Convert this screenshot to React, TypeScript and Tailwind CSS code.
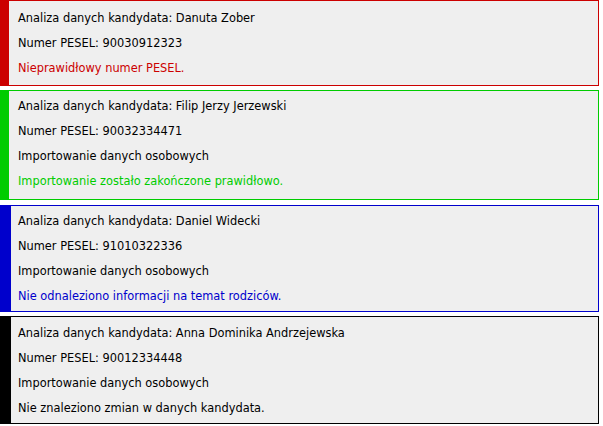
const entries = [
  {
    color: '#cc0000',
    bar: 'w-[8px]',
    box: 'pt-[5px] pb-[4px] pl-[9px]',
    gap: 'mb-[4px]',
    lines: ['Analiza danych kandydata: Danuta Zober', 'Numer PESEL: 90030912323'],
    result: 'Nieprawidłowy numer PESEL.',
    resultColor: 'text-[#cc0000]',
  },
  {
    color: '#00cc00',
    bar: 'w-[8px]',
    box: 'pt-[3px] pb-[5px] pl-[9px]',
    gap: 'mb-[5px]',
    lines: ['Analiza danych kandydata: Filip Jerzy Jerzewski', 'Numer PESEL: 90032334471', 'Importowanie danych osobowych'],
    result: 'Importowanie zostało zakończone prawidłowo.',
    resultColor: 'text-[#00cc00]',
  },
  {
    color: '#0000cc',
    bar: 'w-[10px]',
    box: 'pt-[3px] pb-[2px] pl-[7px]',
    gap: 'mb-[4px]',
    lines: ['Analiza danych kandydata: Daniel Widecki', 'Numer PESEL: 91010322336', 'Importowanie danych osobowych'],
    result: 'Nie odnaleziono informacji na temat rodziców.',
    resultColor: 'text-[#0000cc]',
  },
  {
    color: '#000000',
    bar: 'w-[10px]',
    box: 'pt-[4px] pb-[2px] pl-[7px]',
    gap: 'mb-0',
    lines: ['Analiza danych kandydata: Anna Dominika Andrzejewska', 'Numer PESEL: 90012334448', 'Importowanie danych osobowych'],
    result: 'Nie znaleziono zmian w danych kandydata.',
    resultColor: 'text-black',
  },
];

export default function App() {
  return (
    <div className="w-[603px] h-[426px] bg-white overflow-hidden font-['DejaVu_Sans',Verdana,sans-serif] text-[11.4px] text-black">
      {entries.map((e, i) => (
        <div
          key={i}
          className={`w-[599px] ${e.gap} flex bg-[#efefef] border`}
          style={{ borderColor: e.color }}
        >
          <div className={`${e.bar} shrink-0`} style={{ backgroundColor: e.color }} />
          <div className={`flex-1 ${e.box}`}>
            {e.lines.map((l) => (
              <div key={l} className="h-[25px] leading-[25px] whitespace-nowrap">
                {l}
              </div>
            ))}
            <div className={`h-[25px] leading-[25px] whitespace-nowrap ${e.resultColor}`}>{e.result}</div>
          </div>
        </div>
      ))}
    </div>
  );
}
